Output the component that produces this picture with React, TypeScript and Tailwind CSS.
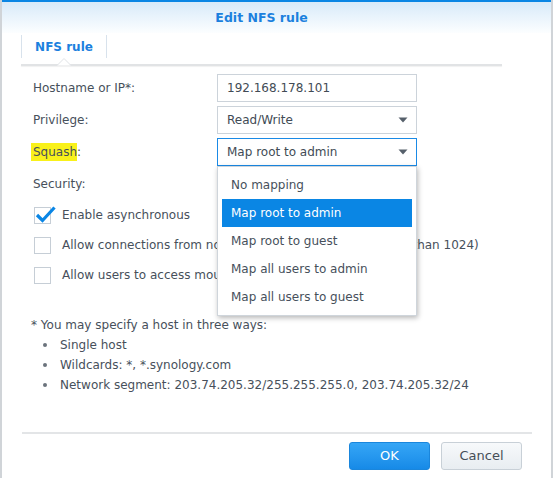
import React from "react";

function Caret() {
  return (
    <svg width="10" height="6" viewBox="0 0 10 6" className="block">
      <path d="M0.5 0.5 L9.5 0.5 L5 5.5 Z" fill="#56606b" />
    </svg>
  );
}

function Checkbox({ checked }: { checked?: boolean }) {
  return (
    <div className="relative w-[17px] h-[17px] border border-[#c6ced6] bg-white shrink-0">
      {checked && (
        <svg
          width="22"
          height="18"
          viewBox="0 0 22 18"
          className="absolute left-[0px] top-[-3px]"
        >
          <path
            d="M2 10 L7.5 15.5 L19.5 2.5"
            fill="none"
            stroke="#0a86e5"
            strokeWidth="3.2"
            strokeLinejoin="miter"
          />
        </svg>
      )}
    </div>
  );
}

export default function App() {
  const font = { fontFamily: '"DejaVu Sans", Verdana, sans-serif' };
  const menu = [
    "No mapping",
    "Map root to admin",
    "Map root to guest",
    "Map all users to admin",
    "Map all users to guest",
  ];
  return (
    <div
      className="w-[553px] h-[478px] bg-white border-l-2 border-r-2 border-[#d0d4d8] flex flex-col text-[12px] text-[#47505b] overflow-hidden"
      style={font}
    >
      {/* header */}
      <div className="h-[33px] shrink-0 border-t-2 border-[#0b86e4] bg-gradient-to-b from-[#d8eaf9] to-[#fcfeff] flex items-center justify-center pr-[30px]">
        <span className="font-bold text-[#1b80de] text-[12.5px] leading-none mt-[1px]">
          Edit NFS rule
        </span>
      </div>

      {/* tabs */}
      <div className="ml-[19px] w-[481px] h-[33px] shrink-0 relative flex items-start pt-[2px]">
        <div className="w-[86px] h-[23px] border-l border-r border-[#d8e2ec] flex items-center justify-center font-bold text-[#1b80de]">
          NFS rule
        </div>
        <div className="absolute left-0 right-0 top-[31px] h-[2px] bg-[#e1e3e5] shadow-[0_1px_1px_rgba(0,0,0,0.06)]" />
        <svg
          width="14"
          height="8"
          viewBox="0 0 14 8"
          className="absolute left-[36px] top-[25px]"
        >
          <path d="M0 7.5 L7 0.5 L14 7.5" fill="#ffffff" stroke="#dfe2e5" strokeWidth="1" />
        </svg>
      </div>

      {/* form */}
      <div className="relative flex flex-col pl-[31px] pt-[8px]">
        <div className="flex items-center h-[28px]">
          <div className="w-[184px]">Hostname or IP*:</div>
          <div className="w-[200px] h-[28px] border border-[#ccd3da] flex items-center pl-[9px] text-[#424b55]">
            192.168.178.101
          </div>
        </div>
        <div className="flex items-center h-[28px] mt-[4px]">
          <div className="w-[184px]">Privilege:</div>
          <div className="w-[200px] h-[28px] border border-[#ccd3da] flex items-center justify-between pl-[9px] pr-[8px] text-[#424b55]">
            <span>Read/Write</span>
            <Caret />
          </div>
        </div>
        <div className="flex items-center h-[28px] mt-[4px]">
          <div className="w-[184px]">
            <span className="bg-[#f9f11a] ml-[-2px] pl-[2px] py-[2px]">Squash</span>:
          </div>
          <div className="relative w-[200px] h-[28px] border border-[#1a8ae6] flex items-center justify-between pl-[9px] pr-[8px] text-[#424b55]">
            <span>Map root to admin</span>
            <Caret />
          </div>
        </div>
        <div className="flex items-center h-[28px] mt-[4px]">Security:</div>

        <div className="flex flex-col pl-[1px] mt-[2px]">
          <div className="flex items-center h-[30px] gap-[11px]">
            <Checkbox checked />
            <span>Enable asynchronous</span>
          </div>
          <div className="flex items-center h-[30px] gap-[11px]">
            <Checkbox />
            <span className="whitespace-nowrap">
              Allow connections from non-privileged ports (ports higher than 1024)
            </span>
          </div>
          <div className="flex items-center h-[30px] gap-[11px]">
            <Checkbox />
            <span>Allow users to access mounted subfolders</span>
          </div>
        </div>

        <div className="mt-[25px] flex flex-col leading-[20px]">
          <div className="ml-[-2px]">* You may specify a host in three ways:</div>
          <ul className="flex flex-col">
            <li className="flex items-center">
              <span className="w-[4px] h-[4px] rounded-full bg-[#6b737c] ml-[10px] mr-[13px]" />
              Single host
            </li>
            <li className="flex items-center">
              <span className="w-[4px] h-[4px] rounded-full bg-[#6b737c] ml-[10px] mr-[13px]" />
              Wildcards: *, *.synology.com
            </li>
            <li className="flex items-center">
              <span className="w-[4px] h-[4px] rounded-full bg-[#6b737c] ml-[10px] mr-[13px]" />
              Network segment: 203.74.205.32/255.255.255.0, 203.74.205.32/24
            </li>
          </ul>
        </div>

        {/* dropdown menu */}
        <div className="absolute left-[215px] top-[100px] w-[200px] bg-white border border-[#cfd5db] shadow-[1px_2px_5px_rgba(0,0,0,0.28)] py-[4px] px-[4px] flex flex-col">
          {menu.map((m, i) => (
            <div
              key={m}
              className={
                "h-[28px] flex items-center pl-[9px] " +
                (i === 1 ? "bg-[#0a86e4] text-white" : "text-[#47505b]")
              }
            >
              {m}
            </div>
          ))}
        </div>
      </div>

      <div className="flex-1" />

      {/* footer */}
      <div className="ml-[20px] w-[510px] h-[2px] bg-[#e3e5e7] shrink-0" />
      <div className="h-[44px] shrink-0 flex items-start justify-end pr-[29px] pt-[8px] gap-[11px]">
        <button className="w-[81px] h-[28px] rounded-[3px] border border-[#1a86dc] bg-gradient-to-b from-[#35a6f6] to-[#168ae7] text-white text-[13px]">
          OK
        </button>
        <button className="w-[81px] h-[28px] rounded-[3px] border border-[#c8d0d7] bg-gradient-to-b from-[#f7f9fb] to-[#e8edf1] text-[#454e58] text-[13px]">
          Cancel
        </button>
      </div>
    </div>
  );
}
